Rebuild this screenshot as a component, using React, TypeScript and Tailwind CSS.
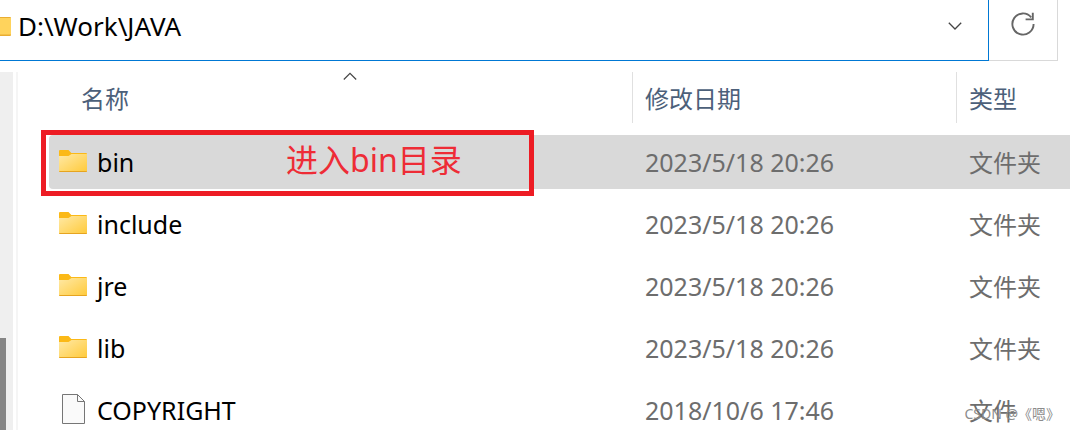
type Entry = { name: string; modified: string; type: string; kind: 'folder' | 'file' };

const entries: Entry[] = [
  { name: 'bin', modified: '2023/5/18 20:26', type: '文件夹', kind: 'folder' },
  { name: 'include', modified: '2023/5/18 20:26', type: '文件夹', kind: 'folder' },
  { name: 'jre', modified: '2023/5/18 20:26', type: '文件夹', kind: 'folder' },
  { name: 'lib', modified: '2023/5/18 20:26', type: '文件夹', kind: 'folder' },
  { name: 'COPYRIGHT', modified: '2018/10/6 17:46', type: '文件', kind: 'file' },
];

function FolderGradient() {
  return (
    <svg className="absolute h-0 w-0" aria-hidden="true">
      <defs>
        <linearGradient id="folder" x1="0" y1="0" x2="1" y2="1">
          <stop offset="0" stopColor="#ffe9a6" />
          <stop offset="1" stopColor="#ffca3a" />
        </linearGradient>
      </defs>
    </svg>
  );
}

function FolderIcon() {
  return (
    <svg className="h-[22px] w-7 shrink-0" viewBox="0 0 28 22" aria-hidden="true">
      <path d="M0 1a1 1 0 0 1 1-1h8.5l2.8 3H27a1 1 0 0 1 1 1v4H0z" fill="#fbb917" />
      <path d="M0 6h9.5L12.5 4H28v17a1 1 0 0 1-1 1H1a1 1 0 0 1-1-1z" fill="url(#folder)" />
      <path d="M0 20.5V21a1 1 0 0 0 1 1h26a1 1 0 0 0 1-1v-.5a.5.5 0 0 1-.5.5H.5a.5.5 0 0 1-.5-.5z" fill="#e6a420" />
    </svg>
  );
}

function FileIcon() {
  return (
    <svg className="ml-[3px] mr-[1px] h-[30px] w-6 shrink-0" viewBox="0 0 24 30" aria-hidden="true">
      <path d="M.5.5h15l7 7v22H.5z" fill="#fafafa" stroke="#767676" />
      <path d="M15.5.5v7h7" fill="none" stroke="#767676" />
    </svg>
  );
}

function HeaderCell({ label, divided }: { label: string; divided?: boolean }) {
  return (
    <th scope="col" className="p-0 text-left font-normal">
      <div
        className={
          divided
            ? 'mb-3 flex h-[51px] items-center border-l border-[#e0e0e0] pl-3 pt-[2px]'
            : 'relative mb-3 flex h-[51px] items-center pl-8 pt-[2px]'
        }
      >
        <button type="button" className="text-2xl text-[#4c607a]">{label}</button>
        {!divided && (
          <svg className="absolute left-[294px] top-0 h-2 w-[14px]" viewBox="0 0 14 8" fill="none" stroke="#444" strokeWidth="1.2" aria-hidden="true">
            <path d="M.8 7.5 7 1.3l6.2 6.2" />
          </svg>
        )}
      </div>
    </th>
  );
}

export default function App() {
  return (
    <div className="relative flex h-screen flex-col overflow-hidden bg-white font-['Noto_Sans','Noto_Sans_CJK_SC',sans-serif] text-[25px] text-black">
      <FolderGradient />
      <header className="flex h-[61px] shrink-0 pr-3">
        <div className="flex min-w-0 flex-1 items-center border-b border-r border-[#0078d4] pb-2">
          <svg className="h-[19px] w-[11px] shrink-0" viewBox="0 0 11 19" aria-hidden="true">
            <path d="M0 0h10a1 1 0 0 1 1 1v17a1 1 0 0 1-1 1H0z" fill="#e9ad32" />
            <path d="M0 1h11v16.5H0z" fill="#ffd35c" />
          </svg>
          <input
            aria-label="地址"
            defaultValue="D:\Work\JAVA"
            className="ml-1 min-w-0 flex-1 bg-transparent pl-[3px] text-[26px] outline-none"
          />
          <button type="button" aria-label="展开" className="mr-[26px] flex h-8 w-[14px] items-center">
            <svg className="h-2 w-[14px]" viewBox="0 0 14 8" fill="none" stroke="#444" strokeWidth="1.3" aria-hidden="true">
              <path d="M.8.8 7 7 13.2.8" />
            </svg>
          </button>
        </div>
        <button
          type="button"
          aria-label="刷新"
          className="flex w-[69px] items-center justify-center border-b border-r border-[#d9d9d9] pb-3"
        >
          <svg className="h-6 w-6" viewBox="0 0 24 24" fill="none" stroke="#666" strokeWidth="1.9" aria-hidden="true">
            <path d="M22.6 12A10.6 10.6 0 1 1 20.2 5.3" />
            <path d="M21.8.8v6.6h-7.2" />
          </svg>
        </button>
      </header>

      <main className="mt-[11px] flex min-h-0 flex-1">
        <div className="w-[13px] shrink-0 bg-[#efefef] pt-[266px]">
          <div className="h-full w-[6px] bg-[#858585]" />
        </div>
        <div className="ml-[3px] w-[2px] shrink-0 bg-[#f5f5f5]" />
        <section className="relative min-w-0 flex-1 pl-[31px]">
          <table className="w-full table-fixed border-collapse">
            <colgroup>
              <col />
              <col className="w-[324px]" />
              <col className="w-[114px]" />
            </colgroup>
            <thead>
              <tr>
                <HeaderCell label="名称" />
                <HeaderCell label="修改日期" divided />
                <HeaderCell label="类型" divided />
              </tr>
            </thead>
            <tbody>
              {entries.map((entry, index) => {
                const fill = index === 0 ? 'bg-[#d9d9d9]' : '';
                return (
                  <tr key={entry.name}>
                    <td className="p-0">
                      <div className={`mb-2 flex h-[54px] items-center gap-[10px] rounded-l-sm pb-[2px] pl-[10px] ${fill}`}>
                        {entry.kind === 'folder' ? <FolderIcon /> : <FileIcon />}
                        <span className="pt-1">{entry.name}</span>
                      </div>
                    </td>
                    <td className="p-0">
                      <div className={`mb-2 flex h-[54px] items-center pl-[13px] pt-[2px] text-[#6d6d6d] ${fill}`}>{entry.modified}</div>
                    </td>
                    <td className="p-0">
                      <div className={`mb-2 flex h-[54px] items-center pl-[13px] pt-[2px] text-2xl text-[#6d6d6d] ${fill}`}>{entry.type}</div>
                    </td>
                  </tr>
                );
              })}
            </tbody>
          </table>
          <div className="pointer-events-none absolute left-[23px] top-[58px] flex h-[66px] w-[493px] items-center border-[5px] border-[#ed1c24] pb-[6px] pl-[240px] text-[32px] text-[#ee2c36]">
            进入bin目录
          </div>
        </section>
      </main>
      <div className="absolute bottom-[6px] right-[10px] text-sm text-[#8c8c8c]">CSDN @《嗯》</div>
    </div>
  );
}
